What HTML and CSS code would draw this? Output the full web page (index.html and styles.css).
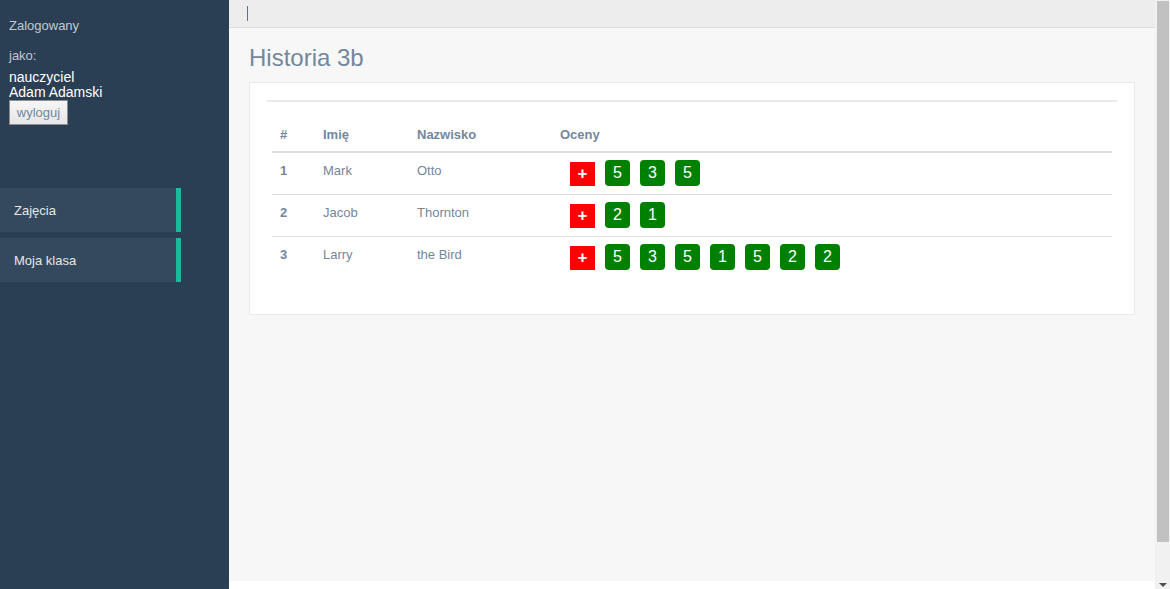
FILE: index.html
```html
<!DOCTYPE html>
<html lang="pl">
<head>
<meta charset="utf-8">
<title>Historia 3b</title>
<link rel="stylesheet" href="styles.css">
</head>
<body>
<div class="app">
  <aside class="sidebar">
    <div class="profile">
      <p class="muted">Zalogowany</p>
      <p class="muted jako">jako:</p>
      <div class="user">nauczyciel<br>Adam Adamski</div>
      <button class="logout" type="button">wyloguj</button>
    </div>
    <nav class="menu">
      <a class="menu-item">Zajęcia</a>
      <a class="menu-item">Moja klasa</a>
    </nav>
  </aside>
  <div class="main">
    <div class="topnav"><span class="caret"></span></div>
    <div class="right-col">
      <h3 class="page-title">Historia 3b</h3>
      <div class="panel">
        <div class="panel-title"></div>
        <div class="panel-content">
          <table class="grades-table">
            <colgroup>
              <col class="c-num"><col class="c-name"><col class="c-surname"><col>
            </colgroup>
            <thead>
              <tr><th>#</th><th>Imię</th><th>Nazwisko</th><th>Oceny</th></tr>
            </thead>
            <tbody>
              <tr>
                <th class="rownum">1</th><td>Mark</td><td>Otto</td>
                <td><div class="grades"><span class="add">+</span><span class="grade">5</span><span class="grade">3</span><span class="grade">5</span></div></td>
              </tr>
              <tr>
                <th class="rownum">2</th><td>Jacob</td><td>Thornton</td>
                <td><div class="grades"><span class="add">+</span><span class="grade">2</span><span class="grade">1</span></div></td>
              </tr>
              <tr>
                <th class="rownum">3</th><td>Larry</td><td>the Bird</td>
                <td><div class="grades"><span class="add">+</span><span class="grade">5</span><span class="grade">3</span><span class="grade">5</span><span class="grade">1</span><span class="grade">5</span><span class="grade">2</span><span class="grade">2</span></div></td>
              </tr>
            </tbody>
          </table>
        </div>
      </div>
    </div>
    <div class="footer"></div>
  </div>
  <div class="scrollbar">
    <div class="thumb"></div>
    <div class="track"></div>
    <div class="arrow-box"><span class="arrow"></span></div>
  </div>
</div>
</body>
</html>
```

FILE: styles.css
```css
* { box-sizing: border-box; }

html, body {
  margin: 0;
  padding: 0;
  height: 589px;
  overflow: hidden;
}

body {
  font-family: "Liberation Sans", Arial, sans-serif;
  font-size: 13px;
  color: #73879c;
  background: #ffffff;
}

.app {
  display: flex;
  height: 589px;
}

/* ---------- sidebar ---------- */
.sidebar {
  width: 229px;
  flex: 0 0 229px;
  background: #2a3f54;
  padding-top: 17px;
}

.profile {
  padding-left: 9px;
}

.muted {
  margin: 0;
  font-size: 13px;
  line-height: 18px;
  color: #c1cad3;
}

.jako {
  margin-top: 12px;
}

.user {
  margin-top: 5px;
  font-size: 14px;
  line-height: 15px;
  color: #ffffff;
}

.logout {
  display: block;
  margin: 0;
  width: 59px;
  height: 25px;
  padding: 0 6px;
  font-family: "Liberation Sans", Arial, sans-serif;
  font-size: 13px;
  color: #73879c;
  background: linear-gradient(#f6f6f6, #e6e6e6);
  border: 1px solid #8e8e8e;
  border-radius: 0;
}

.menu {
  margin-top: 63px;
  display: flex;
  flex-direction: column;
  gap: 6px;
}

.menu-item {
  display: block;
  width: 181px;
  height: 44px;
  line-height: 42px;
  padding-top: 2px;
  padding-left: 14px;
  background: #35495e;
  border-right: 5px solid #1abb9c;
  color: #e7e7e7;
  font-size: 13px;
  text-decoration: none;
}

/* ---------- main ---------- */
.main {
  flex: 1 1 auto;
  display: flex;
  flex-direction: column;
  background: #ffffff;
}

.topnav {
  height: 28px;
  background: #ededed;
  border-bottom: 1px solid #d9dee4;
  padding: 6px 0 0 18px;
}

.caret {
  display: block;
  width: 1px;
  height: 15px;
  background: #5a738e;
}

.right-col {
  height: 553px;
  background: #f7f7f7;
  padding: 17px 20px 0 20px;
}

.footer {
  flex: 1 1 auto;
  background: #ffffff;
}

.page-title {
  margin: 0;
  font-size: 24px;
  font-weight: 400;
  line-height: 26.4px;
  color: #73879c;
}

.panel {
  margin-top: 11px;
  background: #ffffff;
  border: 1px solid #e6e9ed;
  padding: 10px 17px;
}

.panel-title {
  padding: 7px 5px 0;
  border-bottom: 2px solid #e6e9ed;
}

.panel-content {
  padding: 0 5px 6px;
  margin-top: 14px;
}

/* ---------- table ---------- */
.grades-table {
  width: 100%;
  border-collapse: collapse;
  border-spacing: 0;
  table-layout: fixed;
  margin-bottom: 20px;
}

.c-num { width: 43px; }
.c-name { width: 94px; }
.c-surname { width: 143px; }

.grades-table th,
.grades-table td {
  text-align: left;
  vertical-align: top;
  font-size: 13px;
  line-height: 18.57px;
  color: #73879c;
}

.grades-table thead th {
  padding: 10px 8px 6px;
  font-weight: 700;
  border-bottom: 2px solid #dddddd;
}

.grades-table tbody th,
.grades-table tbody td {
  padding: 9px 8px 8px;
  border-top: 1px solid #dddddd;
}

.grades-table tbody td:last-child {
  padding-top: 7px;
}

.grades-table tbody th.rownum {
  font-weight: 700;
}

.grades-table tbody td {
  font-weight: 400;
}

.grades {
  display: flex;
  align-items: flex-end;
  gap: 10px;
  height: 26px;
  padding-left: 10px;
}

.add,
.grade {
  display: flex;
  align-items: center;
  justify-content: center;
  width: 25px;
  color: #ffffff;
  font-size: 16px;
  line-height: 1;
}

.add {
  height: 24px;
  background: #ff0000;
  font-weight: 700;
  font-size: 17px;
}

.grade {
  height: 26px;
  background: #008000;
  border-radius: 4px;
}

/* ---------- fake scrollbar ---------- */
.scrollbar {
  width: 15px;
  flex: 0 0 15px;
  background: #f1f1f1;
  display: flex;
  flex-direction: column;
}

.thumb {
  height: 541px;
  margin: 1px 1px 0 2px;
  background: #c1c1c1;
}

.track {
  flex: 1 1 auto;
}

.arrow-box {
  height: 15px;
  display: flex;
  justify-content: center;
  align-items: flex-start;
  padding-top: 9px;
}

.arrow {
  width: 0;
  height: 0;
  border-left: 4px solid transparent;
  border-right: 4px solid transparent;
  border-top: 4px solid #505050;
}
```
